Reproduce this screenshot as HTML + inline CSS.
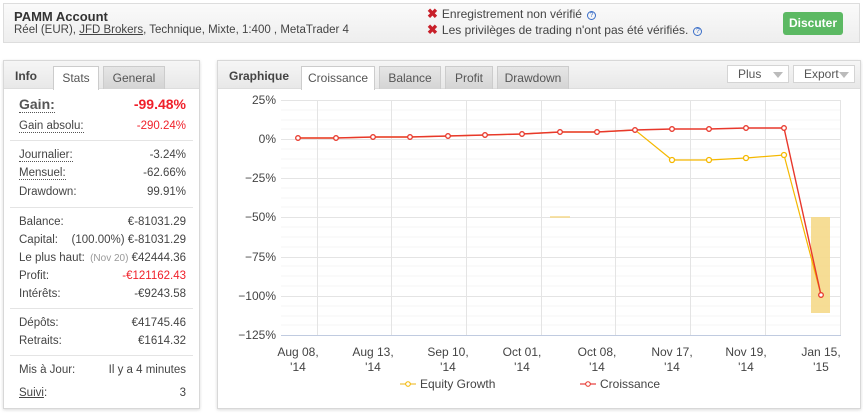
<!DOCTYPE html>
<html><head><meta charset="utf-8"><style>
*{margin:0;padding:0;box-sizing:border-box}
body{width:863px;height:413px;background:#fff;font-family:"Liberation Sans",Arial,sans-serif;font-size:12px;color:#444;position:relative;overflow:hidden}
.a{position:absolute;white-space:nowrap}
.top{left:3px;top:3px;width:857px;height:40px;border:1px solid #ddd;background:linear-gradient(#fafafa,#eee)}
.panel{border:1px solid #d8d8d8;background:#fff;box-shadow:0 1px 3px rgba(0,0,0,.15)}
.ph{background:linear-gradient(#f6f6f6,#e8e8e8);border-bottom:1px solid #ddd}
.tab{position:absolute;top:5px;height:23px;border:1px solid #ccc;border-bottom:none;background:linear-gradient(#e6e6e6,#d4d4d4);text-align:center;line-height:22px;color:#555}
.tab.on{background:#fff;height:24px}
.row{position:absolute;left:15px;right:13px;height:16px;line-height:16px;font-size:11.5px}
.row .v{position:absolute;right:0;top:0}
.dot{border-bottom:1px dotted #555}
.sep{position:absolute;left:6px;right:6px;height:1px;background:#e4e4e4}
.red{color:#f0212b}
.btn{position:absolute;top:65px;height:18px;border:1px solid #d4d4d4;background:#fff;line-height:16px;padding-left:10px;color:#555}
.btn i{position:absolute;right:5px;top:6px;width:0;height:0;border-left:5px solid transparent;border-right:5px solid transparent;border-top:6px solid #bbb}
.q{display:inline-block;width:9px;height:9px;border:1px solid #3a6ec8;border-radius:50%;font-size:7px;line-height:7px;text-align:center;color:#3a6ec8;vertical-align:1px;margin-left:5px}
.x{color:#c8202a;font-weight:bold;font-size:13px;margin-right:4px}
</style></head><body>
<div class="a top"></div>
<div class="a" style="left:14px;top:9px;font-weight:bold;font-size:13px;color:#333">PAMM Account</div>
<div class="a" style="left:14px;top:24px;color:#444;font-size:11.5px">Réel (EUR), <span style="text-decoration:underline">JFD Brokers</span>, Technique, Mixte, 1:400 , MetaTrader 4</div>
<div class="a" style="left:427px;top:6px"><span class="x">✖</span>Enregistrement non vérifié<span class="q">?</span></div>
<div class="a" style="left:427px;top:22px"><span class="x">✖</span>Les privilèges de trading n'ont pas été vérifiés.<span class="q">?</span></div>
<div class="a" style="left:783px;top:12px;width:60px;height:23px;background:#5cb963;border-radius:3px;color:#fff;font-weight:bold;text-align:center;line-height:23px">Discuter</div>

<!-- left panel -->
<div class="a panel" style="left:3px;top:60px;width:197px;height:349px">
<div class="ph" style="position:absolute;left:0;top:0;right:0;height:28px"></div>
<div class="a" style="left:11px;top:8px;font-weight:bold;color:#444">Info</div>
<div class="tab on" style="left:49px;width:46px">Stats</div>
<div class="tab" style="left:99px;width:62px">General</div>
<div class="row" style="top:35px;font-weight:bold;font-size:14px"><span class="dot" style="color:#555">Gain:</span><span class="v red">-99.48%</span></div>
<div class="row" style="top:57px"><span class="dot">Gain absolu:</span><span class="v red">-290.24%</span></div>
<div class="sep" style="top:79px"></div>
<div class="row" style="top:86px"><span class="dot">Journalier:</span><span class="v">-3.24%</span></div>
<div class="row" style="top:104px"><span class="dot">Mensuel:</span><span class="v">-62.66%</span></div>
<div class="row" style="top:123px">Drawdown:<span class="v">99.91%</span></div>
<div class="sep" style="top:146px"></div>
<div class="row" style="top:153px">Balance:<span class="v">€-81031.29</span></div>
<div class="row" style="top:171px">Capital:<span class="v">(100.00%) €-81031.29</span></div>
<div class="row" style="top:189px">Le plus haut:<span class="v"><span style="color:#999;font-size:10px">(Nov 20)</span> €42444.36</span></div>
<div class="row" style="top:207px">Profit:<span class="v red">-€121162.43</span></div>
<div class="row" style="top:225px">Intérêts:<span class="v">-€9243.58</span></div>
<div class="sep" style="top:247px"></div>
<div class="row" style="top:254px">Dépôts:<span class="v">€41745.46</span></div>
<div class="row" style="top:272px">Retraits:<span class="v">€1614.32</span></div>
<div class="sep" style="top:294px"></div>
<div class="row" style="top:301px">Mis à Jour:<span class="v">Il y a 4 minutes</span></div>
<div class="row" style="top:324px"><span style="text-decoration:underline">Suivi</span>:<span class="v">3</span></div>
</div>

<!-- right panel -->
<div class="a panel" style="left:217px;top:60px;width:644px;height:349px">
<div class="ph" style="position:absolute;left:0;top:0;right:0;height:28px"></div>
<div class="a" style="left:11px;top:8px;font-weight:bold;color:#444">Graphique</div>
<div class="tab on" style="left:83px;width:74px">Croissance</div>
<div class="tab" style="left:161px;width:62px">Balance</div>
<div class="tab" style="left:227px;width:48px">Profit</div>
<div class="tab" style="left:279px;width:72px">Drawdown</div>
</div>
<div class="btn" style="left:727px;width:62px">Plus<i></i></div>
<div class="btn" style="left:793px;width:62px">Export<i></i></div>

<svg class="a" style="left:0;top:0" width="863" height="413" font-family="Liberation Sans, Arial, sans-serif" font-size="12">
<g stroke="#f4f4f4" stroke-width="1">
<line x1="281" y1="110" x2="840" y2="110"/><line x1="281" y1="120" x2="840" y2="120"/><line x1="281" y1="129" x2="840" y2="129"/>
<line x1="281" y1="149" x2="840" y2="149"/><line x1="281" y1="159" x2="840" y2="159"/><line x1="281" y1="168" x2="840" y2="168"/>
<line x1="281" y1="188" x2="840" y2="188"/><line x1="281" y1="198" x2="840" y2="198"/><line x1="281" y1="207" x2="840" y2="207"/>
<line x1="281" y1="227" x2="840" y2="227"/><line x1="281" y1="237" x2="840" y2="237"/><line x1="281" y1="247" x2="840" y2="247"/>
<line x1="281" y1="266" x2="840" y2="266"/><line x1="281" y1="276" x2="840" y2="276"/><line x1="281" y1="286" x2="840" y2="286"/>
<line x1="281" y1="306" x2="840" y2="306"/><line x1="281" y1="316" x2="840" y2="316"/><line x1="281" y1="325" x2="840" y2="325"/>
</g>
<g stroke="#e4e4e4" stroke-width="1">
<line x1="281" y1="100.5" x2="840" y2="100.5"/><line x1="281" y1="139.5" x2="840" y2="139.5"/><line x1="281" y1="178.5" x2="840" y2="178.5"/>
<line x1="281" y1="217.5" x2="840" y2="217.5"/><line x1="281" y1="257.5" x2="840" y2="257.5"/><line x1="281" y1="296.5" x2="840" y2="296.5"/>
<line x1="317.5" y1="100" x2="317.5" y2="335"/><line x1="391.5" y1="100" x2="391.5" y2="335"/><line x1="466.5" y1="100" x2="466.5" y2="335"/>
<line x1="541.5" y1="100" x2="541.5" y2="335"/><line x1="615.5" y1="100" x2="615.5" y2="335"/><line x1="690.5" y1="100" x2="690.5" y2="335"/>
<line x1="765.5" y1="100" x2="765.5" y2="335"/><line x1="840.5" y1="100" x2="840.5" y2="335"/>
</g>
<line x1="281" y1="335.5" x2="841" y2="335.5" stroke="#c0cbe0"/>
<g fill="#444" text-anchor="end">
<text x="276" y="104">25%</text><text x="276" y="143">0%</text><text x="276" y="182">−25%</text><text x="276" y="221">−50%</text>
<text x="276" y="261">−75%</text><text x="276" y="300">−100%</text><text x="276" y="339">−125%</text>
</g>
<g fill="#444" text-anchor="middle" font-size="12">
<text x="298" y="356">Aug 08,</text><text x="298" y="371">'14</text>
<text x="373" y="356">Aug 13,</text><text x="373" y="371">'14</text>
<text x="448" y="356">Sep 10,</text><text x="448" y="371">'14</text>
<text x="522" y="356">Oct 01,</text><text x="522" y="371">'14</text>
<text x="597" y="356">Oct 08,</text><text x="597" y="371">'14</text>
<text x="672" y="356">Nov 17,</text><text x="672" y="371">'14</text>
<text x="746" y="356">Nov 19,</text><text x="746" y="371">'14</text>
<text x="821" y="356">Jan 15,</text><text x="821" y="371">'15</text>
</g>
<rect x="811" y="217" width="19" height="96" fill="#f5d98a" opacity=".9"/>
<line x1="550" y1="217" x2="570" y2="217" stroke="#f5d98a" stroke-width="1.5"/>
<polyline fill="none" stroke="#f5b800" stroke-width="1.2" points="298,138 336,138 373,137 410,137 448,136 485,135 522,134 560,132 597,132 635,130 672,160 709,160 746,158 784,155 821,295"/>
<polyline fill="none" stroke="#e8382c" stroke-width="1.4" points="298,138 336,138 373,137 410,137 448,136 485,135 522,134 560,132 597,132 635,130 672,129 709,129 746,128 784,128 821,295"/>
<g fill="#fff" stroke="#f5b800" stroke-width="1.3">
<circle cx="672" cy="160" r="2.5"/><circle cx="709" cy="160" r="2.5"/><circle cx="746" cy="158" r="2.5"/><circle cx="784" cy="155" r="2.5"/>
</g>
<g fill="#fff" stroke="#e8382c" stroke-width="1.3">
<circle cx="298" cy="138" r="2.3"/><circle cx="336" cy="138" r="2.3"/><circle cx="373" cy="137" r="2.3"/><circle cx="410" cy="137" r="2.3"/>
<circle cx="448" cy="136" r="2.3"/><circle cx="485" cy="135" r="2.3"/><circle cx="522" cy="134" r="2.3"/><circle cx="560" cy="132" r="2.3"/>
<circle cx="597" cy="132" r="2.3"/><circle cx="635" cy="130" r="2.3"/><circle cx="672" cy="129" r="2.3"/><circle cx="709" cy="129" r="2.3"/>
<circle cx="746" cy="128" r="2.3"/><circle cx="784" cy="128" r="2.3"/><circle cx="821" cy="295" r="2.3"/>
</g>
<line x1="400" y1="384" x2="416" y2="384" stroke="#f5d98a" stroke-width="2"/><circle cx="408" cy="384" r="2.3" fill="#fff" stroke="#f5b800"/>
<text x="420" y="388" fill="#444">Equity Growth</text>
<line x1="580" y1="384" x2="596" y2="384" stroke="#f08a8a" stroke-width="2"/><circle cx="588" cy="384" r="2.3" fill="#fff" stroke="#e8382c"/>
<text x="600" y="388" fill="#444">Croissance</text>
</svg>
</body></html>
